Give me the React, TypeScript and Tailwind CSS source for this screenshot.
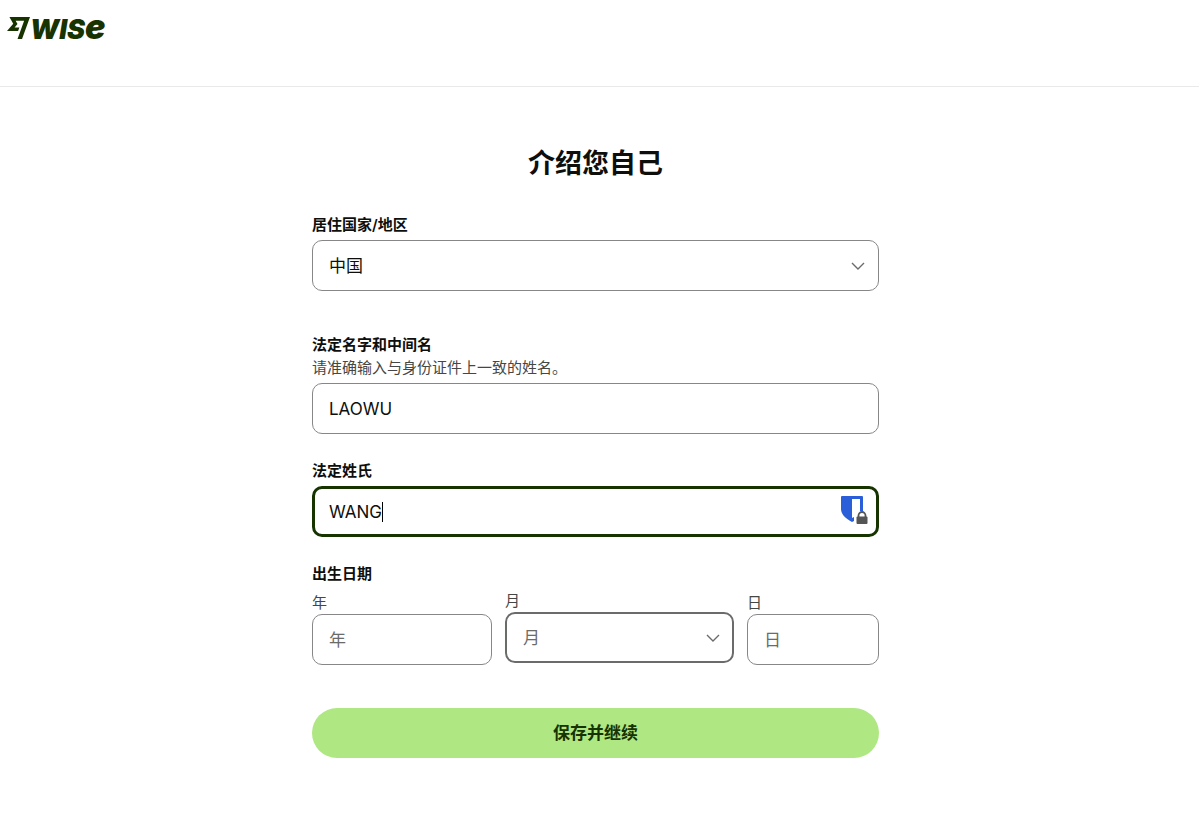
import { useState } from "react";
import type { ReactNode } from "react";
import clsx from "clsx";

const fieldStyles =
  "block h-[51px] w-full appearance-none rounded-[10px] border bg-white px-4 text-[17px] text-[#0e0f0c] outline-none placeholder:text-[#6a6c6a] placeholder:opacity-100";

interface FieldProps {
  id: string;
  label: string;
  hint?: string;
  children: ReactNode;
}

function Field({ id, label, hint, children }: FieldProps) {
  return (
    <div>
      <label htmlFor={id} className="block text-[15px] leading-[23px] font-semibold text-[#0e0f0c]">
        {label}
      </label>
      {hint && <p className="text-[15px] leading-[23px] text-[#454745]">{hint}</p>}
      <div className="relative mt-1">{children}</div>
    </div>
  );
}

function DatePart({ id, label, children }: FieldProps) {
  return (
    <div>
      <label htmlFor={id} className="block text-[15px] leading-[23px] text-[#454745]">
        {label}
      </label>
      <div className="relative">{children}</div>
    </div>
  );
}

function SelectChevron() {
  return (
    <svg
      className="pointer-events-none absolute top-[22px] right-[14px] text-[#6a6c6a]"
      width="14"
      height="8"
      viewBox="0 0 14 8"
      fill="none"
      stroke="currentColor"
      strokeWidth="1.4"
      aria-hidden="true"
    >
      <path d="M1 1L7 7L13 1" />
    </svg>
  );
}

function WiseLogo() {
  return (
    <a href="#" aria-label="Wise" className="inline-flex items-baseline font-black text-[#163300] italic">
      <svg width="23" height="22" viewBox="0 0.6 24 22.8" fill="currentColor" preserveAspectRatio="none" aria-hidden="true">
        <path d="M6.488 7.469 0 15.05h11.585l1.301-3.576H7.922l3.033-3.507.01-.092L8.993 4.48h8.873l-6.878 18.925h4.706L24 .595H2.543l3.945 6.874Z" />
      </svg>
      <span className="text-[27px] leading-8">WIS</span>
      <span className="text-[34px] leading-8">e</span>
    </a>
  );
}

function PasswordManagerIcon() {
  return (
    <svg
      className="pointer-events-none absolute top-[10px] right-[11px]"
      width="27"
      height="29"
      viewBox="0 0 27 29"
      aria-hidden="true"
    >
      <path d="M0 1Q0 0 1 0H21Q22 0 22 1V15H19V3H11V22L13 21V25L11 26C4 22 0 18 0 13Z" fill="#2b5fd9" />
      <path
        d="M17.5 21V19.5a3.5 3.5 0 0 1 7 0V21"
        fill="none"
        stroke="#555"
        strokeWidth="1.8"
      />
      <rect x="15.5" y="20.5" width="11" height="7.5" rx="1" fill="#555" />
    </svg>
  );
}

export default function App() {
  const [firstName, setFirstName] = useState("LAOWU");
  const [lastName, setLastName] = useState("WANG");

  return (
    <div className="min-h-screen bg-white font-['Inter','Noto_Sans_CJK_SC',sans-serif] text-[#0e0f0c]">
      <header className="h-[87px] border-b border-[#e8e9e8] px-[7px] pt-[11px]">
        <WiseLogo />
      </header>

      <main className="pt-[59px] pr-2 pb-16">
        <form className="mx-auto w-full max-w-[567px]" onSubmit={(e) => e.preventDefault()}>
          <h1 className="mb-[31px] text-center text-[27px] leading-9 font-semibold">介绍您自己</h1>

          <Field id="country" label="居住国家/地区">
            <select id="country" className={clsx(fieldStyles, "border-[#868786] pt-0.5")}>
              <option>中国</option>
            </select>
            <SelectChevron />
          </Field>

          <div className="mt-[42px]">
            <Field id="first-name" label="法定名字和中间名" hint="请准确输入与身份证件上一致的姓名。">
              <input
                id="first-name"
                type="text"
                value={firstName}
                onChange={(e) => setFirstName(e.target.value)}
                className={clsx(fieldStyles, "border-[#868786]")}
              />
            </Field>
          </div>

          <div className="mt-[25px]">
            <Field id="last-name" label="法定姓氏">
              <input
                id="last-name"
                type="text"
                value={lastName}
                onChange={(e) => setLastName(e.target.value)}
                className="block h-[51px] w-full rounded-[10px] border-3 border-[#163300] bg-white px-[14px] text-[17px] caret-transparent outline-none"
              />
              <span className="pointer-events-none absolute top-4 left-[70px] h-5 w-px bg-black" />
              <PasswordManagerIcon />
            </Field>
          </div>

          <fieldset className="mt-[25px]">
            <legend className="text-[15px] leading-[23px] font-semibold">出生日期</legend>
            <div className="mt-1 grid grid-cols-[180fr_229fr_132fr] gap-[13px]">
              <div className="pt-0.5">
                <DatePart id="year" label="年">
                  <input id="year" type="text" placeholder="年" className={clsx(fieldStyles, "border-[#868786]")} />
                </DatePart>
              </div>
              <DatePart id="month" label="月">
                <select
                  id="month"
                  className="block h-[51px] w-full appearance-none rounded-[10px] border-2 border-[#6a6c6a] bg-white px-4 pt-0.5 text-[17px] text-[#6a6c6a] outline-none"
                >
                  <option>月</option>
                </select>
                <SelectChevron />
              </DatePart>
              <div className="pt-0.5">
                <DatePart id="day" label="日">
                  <input id="day" type="text" placeholder="日" className={clsx(fieldStyles, "border-[#868786]")} />
                </DatePart>
              </div>
            </div>
          </fieldset>

          <button
            type="submit"
            className="mt-[43px] h-[50px] w-full rounded-full bg-[#afe782] pt-0.5 text-[17px] font-semibold text-[#163300]"
          >
            保存并继续
          </button>
        </form>
      </main>
    </div>
  );
}
